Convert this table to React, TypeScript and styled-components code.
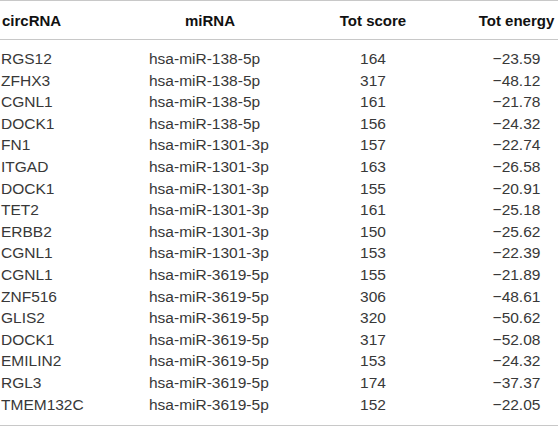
import React from "react";
import styled, { createGlobalStyle } from "styled-components";

const Global = createGlobalStyle`
  html, body { margin: 0; padding: 0; background: #fff; }
  body { font-family: "Liberation Sans", Arial, Helvetica, sans-serif; }
`;

const Table = styled.div`
  width: 558px;
  border-top: 1px solid #c8c8c8;
  border-bottom: 1px solid #c8c8c8;
  box-sizing: border-box;
  height: 426px;
  display: flex;
  flex-direction: column;
`;

const cols = "149px 122px 204px 83px";

const HeadRow = styled.div`
  display: grid;
  grid-template-columns: ${cols};
  height: 38px;
  align-items: center;
  border-bottom: 1px solid #c8c8c8;
`;

const Body = styled.div`
  padding-top: 8px;
  display: flex;
  flex-direction: column;
`;

const Row = styled.div`
  display: grid;
  grid-template-columns: ${cols};
  height: 21.6px;
  align-items: center;
`;

const HeadCell = styled.div<{ $align: "left" | "center" }>`
  font-size: 15px;
  font-weight: bold;
  color: #111;
  text-align: ${(p) => p.$align};
  padding-left: ${(p) => (p.$align === "left" ? "2px" : "0")};
  white-space: nowrap;
`;

const Cell = styled.div<{ $align: "left" | "center" }>`
  font-size: 15.5px;
  color: #383838;
  text-align: ${(p) => p.$align};
  padding-left: ${(p) => (p.$align === "left" ? "1px" : "0")};
  white-space: nowrap;
  line-height: 21.6px;
`;

const MiCell = styled(Cell)`
  padding-left: 0;
`;

const rows: [string, string, string, string][] = [
  ["RGS12", "hsa-miR-138-5p", "164", "\u221223.59"],
  ["ZFHX3", "hsa-miR-138-5p", "317", "\u221248.12"],
  ["CGNL1", "hsa-miR-138-5p", "161", "\u221221.78"],
  ["DOCK1", "hsa-miR-138-5p", "156", "\u221224.32"],
  ["FN1", "hsa-miR-1301-3p", "157", "\u221222.74"],
  ["ITGAD", "hsa-miR-1301-3p", "163", "\u221226.58"],
  ["DOCK1", "hsa-miR-1301-3p", "155", "\u221220.91"],
  ["TET2", "hsa-miR-1301-3p", "161", "\u221225.18"],
  ["ERBB2", "hsa-miR-1301-3p", "150", "\u221225.62"],
  ["CGNL1", "hsa-miR-1301-3p", "153", "\u221222.39"],
  ["CGNL1", "hsa-miR-3619-5p", "155", "\u221221.89"],
  ["ZNF516", "hsa-miR-3619-5p", "306", "\u221248.61"],
  ["GLIS2", "hsa-miR-3619-5p", "320", "\u221250.62"],
  ["DOCK1", "hsa-miR-3619-5p", "317", "\u221252.08"],
  ["EMILIN2", "hsa-miR-3619-5p", "153", "\u221224.32"],
  ["RGL3", "hsa-miR-3619-5p", "174", "\u221237.37"],
  ["TMEM132C", "hsa-miR-3619-5p", "152", "\u221222.05"],
];

export default function App() {
  return (
    <>
      <Global />
      <Table>
        <HeadRow>
          <HeadCell $align="left">circRNA</HeadCell>
          <HeadCell $align="center">miRNA</HeadCell>
          <HeadCell $align="center">Tot score</HeadCell>
          <HeadCell $align="center">Tot energy</HeadCell>
        </HeadRow>
        <Body>
          {rows.map((r, i) => (
            <Row key={i}>
              <Cell $align="left">{r[0]}</Cell>
              <MiCell $align="left">{r[1]}</MiCell>
              <Cell $align="center">{r[2]}</Cell>
              <Cell $align="center">{r[3]}</Cell>
            </Row>
          ))}
        </Body>
      </Table>
    </>
  );
}
